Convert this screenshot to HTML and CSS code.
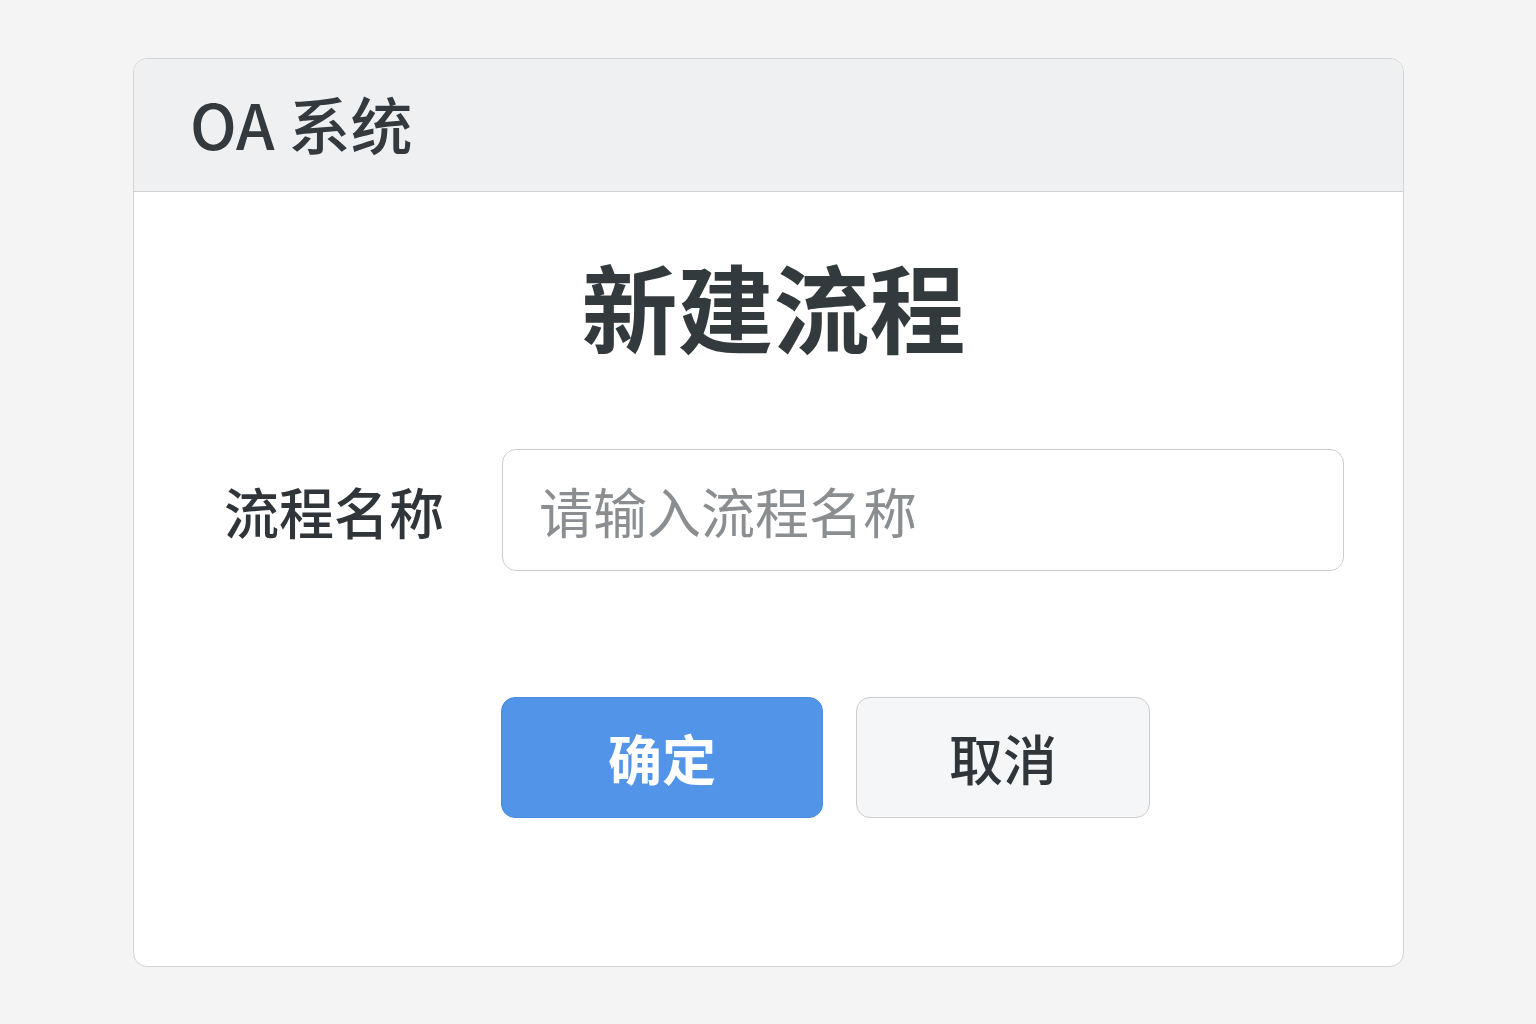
FILE: index.html
```html
<!DOCTYPE html>
<html lang="zh-CN">
<head>
<meta charset="utf-8">
<title>OA 系统 - 新建流程</title>
<link rel="stylesheet" href="styles.css">
</head>
<body>
<div class="card">
  <header class="card-header">
    <span class="brand">OA 系统</span>
  </header>
  <main class="card-body">
    <h1 class="title">新建流程</h1>
    <div class="form-row">
      <label class="label" for="flowName">流程名称</label>
      <input class="input" id="flowName" type="text" placeholder="请输入流程名称">
    </div>
    <div class="actions">
      <button class="btn btn-primary">确定</button>
      <button class="btn btn-default">取消</button>
    </div>
  </main>
</div>
</body>
</html>
```
FILE: styles.css
```css
html, body {
  margin: 0;
  padding: 0;
}
body {
  background: #f4f4f4;
  font-family: "Noto Sans CJK SC", "Noto Sans", sans-serif;
  color: #333a3d;
  padding: 58px 0 0 133px;
  height: 1024px;
  box-sizing: border-box;
}
.card {
  width: 1271px;
  height: 909px;
  box-sizing: border-box;
  background: #ffffff;
  border: 1px solid #d2d4d6;
  border-radius: 14px;
  overflow: hidden;
  display: flex;
  flex-direction: column;
}
.card-header {
  height: 133px;
  box-sizing: border-box;
  background: #eef0f2;
  border-bottom: 1px solid #cfd2d5;
  display: flex;
  align-items: center;
  padding-left: 56px;
  padding-bottom: 5px;
}
.brand {
  font-size: 62px;
  font-weight: 500;
  color: #33393c;
  line-height: 1;
}
.card-body {
  display: flex;
  flex-direction: column;
}
.title {
  margin: 65px 0 0 0;
  text-align: center;
  font-size: 96px;
  font-weight: 700;
  line-height: 96px;
  color: #333a3d;
  padding-left: 10px;
}
.form-row {
  display: flex;
  align-items: center;
  margin-top: 96px;
  padding-left: 90px;
  padding-right: 59px;
}
.label {
  width: 278px;
  flex: none;
  font-size: 55px;
  font-weight: 500;
  color: #2f3538;
  line-height: 1;
}
.input {
  flex: 1;
  height: 122px;
  box-sizing: border-box;
  border: 1px solid #cbcdcf;
  border-radius: 14px;
  background: #fff;
  padding: 0 36px;
  font-family: "Noto Sans CJK SC", "Noto Sans", sans-serif;
  font-size: 54px;
  color: #333a3d;
  outline: none;
}
.input::placeholder {
  color: #8a8e90;
}
.actions {
  display: flex;
  gap: 33px;
  margin-top: 126px;
  padding-left: 367px;
}
.btn {
  height: 121px;
  box-sizing: border-box;
  border-radius: 14px;
  font-family: "Noto Sans CJK SC", "Noto Sans", sans-serif;
  font-size: 54px;
  line-height: 1;
  cursor: pointer;
}
.btn-primary {
  width: 322px;
  background: #5294e8;
  border: 1px solid #4a8ae0;
  color: #ffffff;
  font-weight: 700;
}
.btn-default {
  width: 294px;
  background: #f5f6f7;
  border: 1px solid #cbcdcf;
  color: #2f3538;
  font-weight: 500;
}
```
